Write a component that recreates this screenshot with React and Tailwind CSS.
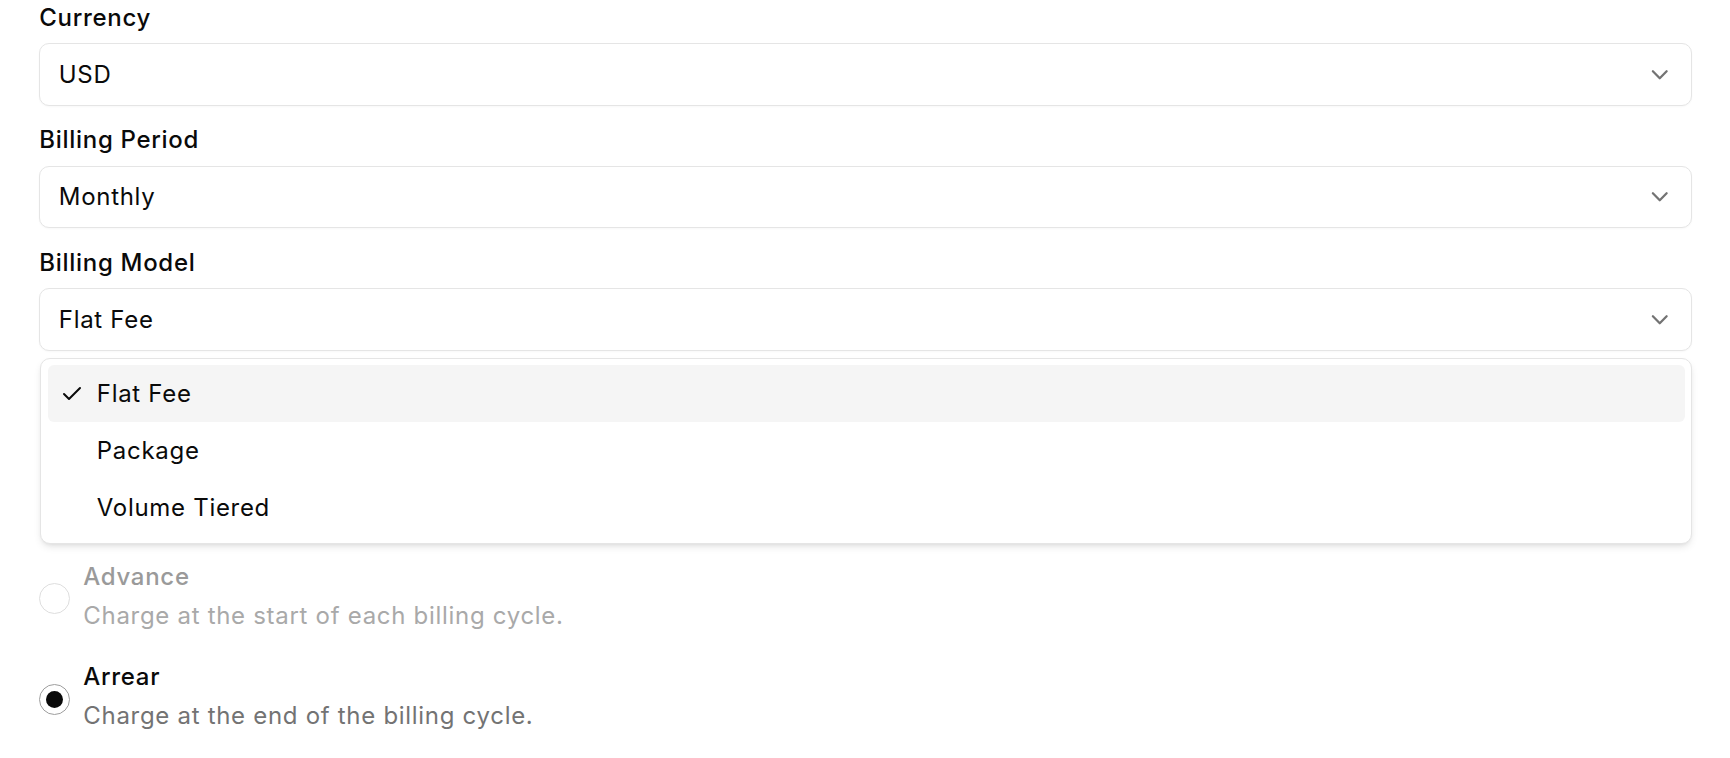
import React from "react";

function Chevron() {
  return (
    <svg width="27.5" height="27.5" viewBox="0 0 24 24" fill="none" stroke="#737373" strokeWidth="2" strokeLinecap="round" strokeLinejoin="round">
      <path d="m6 9 6 6 6-6" />
    </svg>
  );
}

function Check() {
  return (
    <svg width="24" height="24" viewBox="0 0 24 24" fill="none" stroke="#0a0a0a" strokeWidth="2" strokeLinecap="round" strokeLinejoin="round">
      <path d="M20 6 9 17l-5-5" />
    </svg>
  );
}

function Trigger({ value }) {
  return (
    <div className="h-[62.4px] flex items-center justify-between rounded-[10px] border border-[#e5e5e5] bg-white pl-[18.5px] pr-[18px] shadow-[0_1px_2px_rgba(0,0,0,0.03)]">
      <span className="text-[24px] leading-none">{value}</span>
      <Chevron />
    </div>
  );
}

function Field({ label, value, className = "", children }) {
  return (
    <div className={"relative flex flex-col gap-[13.4px] " + className}>
      <div className="text-[24px] leading-none font-medium">{label}</div>
      <Trigger value={value} />
      {children}
    </div>
  );
}

function Item({ label, selected }) {
  return (
    <div className={"relative h-[57px] flex items-center pl-[49px] rounded-[6px] text-[24px] " + (selected ? "bg-[#f5f5f5]" : "")}>
      {selected && (
        <span className="absolute left-[12px] top-1/2 -translate-y-1/2 flex">
          <Check />
        </span>
      )}
      {label}
    </div>
  );
}

function Radio({ title, desc, checked, disabled }) {
  return (
    <div className="flex items-center gap-[13px]">
      <div
        className={
          "w-[31px] h-[31px] shrink-0 rounded-full border flex items-center justify-center " +
          (disabled ? "border-[#dedede]" : "border-[#9e9e9e]")
        }
      >
        {checked && <div className="w-[17px] h-[17px] rounded-full bg-[#0a0a0a]" />}
      </div>
      <div className="flex flex-col">
        <div className={"text-[24px] leading-none font-medium " + (disabled ? "text-[#9a9a9a]" : "text-[#0a0a0a]")}>{title}</div>
        <div className={"mt-[10.5px] text-[24px] leading-[34.4px] " + (disabled ? "text-[#a9a9a9]" : "text-[#737373]")}>{desc}</div>
      </div>
    </div>
  );
}

export default function App() {
  return (
    <div className="w-[1730px] h-[758px] overflow-hidden bg-white text-[#0a0a0a] font-['Inter',sans-serif] tracking-[0.7px]">
      <div className="pl-[39.3px] pr-[38px] pt-[6px] flex flex-col">
        <Field label="Currency" value="USD" />
        <Field label="Billing Period" value="Monthly" className="mt-[22.7px]" />
        <Field label="Billing Model" value="Flat Fee" className="mt-[22.7px] z-10">
          <div className="absolute left-[1px] right-0 top-[calc(100%+7px)] rounded-[10px] border border-[#e5e5e5] bg-white p-[6.5px] shadow-[0_4px_8px_-2px_rgba(0,0,0,0.12),0_2px_4px_-2px_rgba(0,0,0,0.08)]">
            <Item label="Flat Fee" selected />
            <Item label="Package" />
            <Item label="Volume Tiered" />
          </div>
        </Field>
        <div className="mt-[213.8px] flex flex-col gap-[31.5px]">
          <Radio title="Advance" desc="Charge at the start of each billing cycle." disabled />
          <Radio title="Arrear" desc="Charge at the end of the billing cycle." checked />
        </div>
      </div>
    </div>
  );
}
